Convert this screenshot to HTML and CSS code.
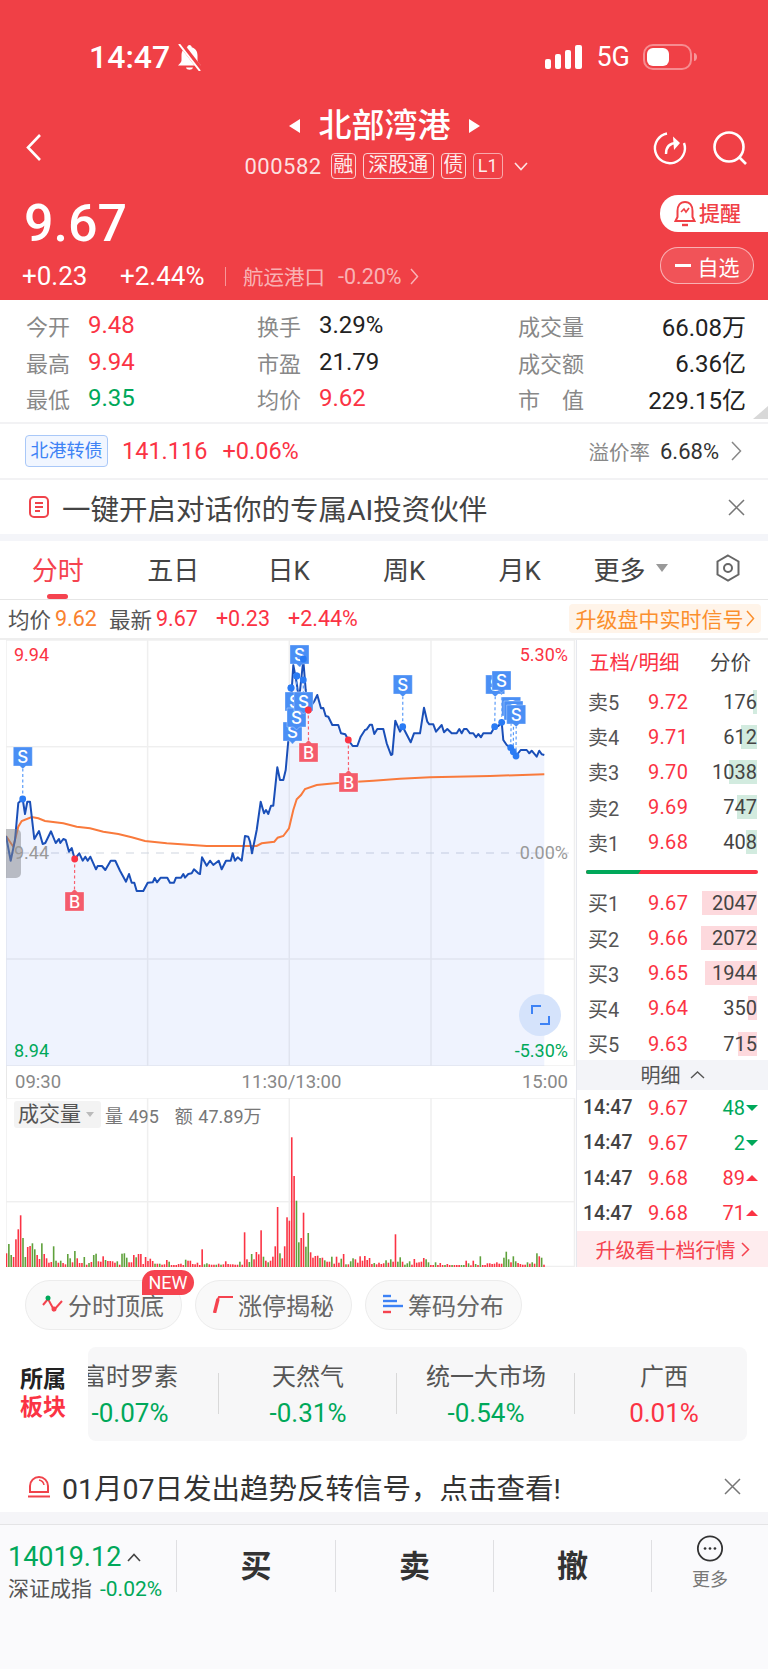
FILE: index.html
```html
<!DOCTYPE html>
<html lang="zh-CN">
<head>
    <meta charset="UTF-8">
    <meta name="viewport" content="width=device-width, initial-scale=1.0">
    <title>北部湾港 000582</title>
    <link rel="stylesheet" href="styles.css">
</head>
<body>
<div class="page">
    <header class="header">
        <div class="status-bar">
            <div class="status-left">
                <span class="clock">14:47</span>
                <svg class="bell-mute" width="27" height="27" viewBox="0 0 27 27"><path d="M13.500 1c-1.200 0-2.200 1-2.200 2.200-3.800 1-5.800 4.300-5.800 8v5c0 2-2 3.300-3.500 5.300h23c-1.500-2-3.500-3.300-3.500-5.300v-5c0-3.700-2-7-5.800-8 0-1.200-1-2.200-2.200-2.200zM10 23.500h7c-.6 3-6.400 3-7 0z" fill="#fff"/><path d="M5 0l21 27" stroke="#f04046" stroke-width="5"/><path d="M3 0l21 27" stroke="#fff" stroke-width="2"/></svg>
            </div>
            <div class="status-right">
                <svg width="37" height="24" viewBox="0 0 37 24" fill="#fff"><rect x="0" y="14" width="6" height="10" rx="2"/><rect x="10" y="9" width="6" height="15" rx="2"/><rect x="20" y="5" width="6" height="19" rx="2"/><rect x="30" y="0" width="7" height="24" rx="2"/></svg>
                <span class="net">5G</span>
                <svg width="54" height="26" viewBox="0 0 54 26"><rect x="1" y="1" width="47" height="24" rx="9" fill="none" stroke="#fff" stroke-opacity=".4" stroke-width="2"/><rect x="4" y="4" width="22" height="18" rx="6" fill="#fff"/><path d="M51 9c2 0 3 2 3 4s-1 4-3 4z" fill="#fff" fill-opacity=".45"/></svg>
            </div>
        </div>
        <div class="nav">
            <svg class="back" width="17" height="29" viewBox="0 0 17 29"><path d="M15 2L3 14.500 15 27" fill="none" stroke="#fff" stroke-width="2.600"/></svg>
            <div class="nav-title">
                <div class="stock-name"><span class="arrow-left"></span>北部湾港<span class="arrow-right"></span></div>
                <div class="stock-sub">
                    <span class="stock-code">000582</span>
                    <span class="tag">融</span>
                    <span class="tag tag-wide">深股通</span>
                    <span class="tag">债</span>
                    <span class="tag tag-dim">L1</span>
                    <svg width="14" height="9" viewBox="0 0 14 9"><path d="M1 1l6 6.500L13 1" fill="none" stroke="#fff" stroke-opacity=".85" stroke-width="1.600"/></svg>
                </div>
            </div>
            <div class="nav-icons">
                <svg width="36" height="36" viewBox="0 0 36 36" fill="none" stroke="#fff" stroke-width="2.400"><path d="M15 3.500A15 15 0 1 0 32 13"/><path d="M14 24c0-7 4-11 11-11"/><path d="M21 6.500l7 6.500-6 7" stroke-width="0" fill="#fff"/></svg>
                <svg width="36" height="36" viewBox="0 0 36 36" fill="none" stroke="#fff" stroke-width="2.600"><circle cx="17" cy="17" r="14.500"/><path d="M27 27l7 7"/></svg>
            </div>
        </div>
        <div class="quote">
            <div class="quote-main">
                <div class="last-price">9.67</div>
                <div class="quote-change">
                    <span class="chg-abs">+0.23</span>
                    <span class="chg-pct">+2.44%</span>
                    <span class="chg-sep"></span>
                    <span class="chg-sector">航运港口</span>
                    <span class="chg-sector-val">-0.20%</span>
                    <svg width="9" height="17" viewBox="0 0 9 17"><path d="M1 1l6.500 7.500L1 16" fill="none" stroke="#fff" stroke-opacity=".6" stroke-width="1.500"/></svg>
                </div>
            </div>
            <div class="quote-actions">
                <div class="btn-remind">
                    <svg width="22" height="28" viewBox="0 0 22 28" fill="none" stroke="#f04046" stroke-width="2"><path d="M11 2C6 2 3.500 6 3.500 11v6L1.500 21h19l-2-4v-6C18.500 6 16 2 11 2z"/><path d="M7 12l3-3 2 3 3-4" stroke-width="1.600"/><path d="M8 25h6" stroke-width="2.400"/></svg>
                    <span>提醒</span>
                </div>
                <div class="btn-watch"><span class="minus"></span>自选</div>
            </div>
        </div>
    </header>

    <section class="stats">
        <div class="stat-col stat-col-1">
            <div class="stat"><span class="stat-label">今开</span><span class="red">9.48</span></div>
            <div class="stat"><span class="stat-label">最高</span><span class="red">9.94</span></div>
            <div class="stat"><span class="stat-label">最低</span><span class="green">9.35</span></div>
        </div>
        <div class="stat-col stat-col-2">
            <div class="stat"><span class="stat-label">换手</span><span>3.29%</span></div>
            <div class="stat"><span class="stat-label">市盈</span><span>21.79</span></div>
            <div class="stat"><span class="stat-label">均价</span><span class="red">9.62</span></div>
        </div>
        <div class="stat-col stat-col-3">
            <div class="stat"><span class="stat-label">成交量</span><span>66.08万</span></div>
            <div class="stat"><span class="stat-label">成交额</span><span>6.36亿</span></div>
            <div class="stat"><span class="stat-label stat-label-wide">市值</span><span>229.15亿</span></div>
        </div>
        <div class="corner"></div>
    </section>

    <section class="bond">
        <span class="bond-tag">北港转债</span>
        <span class="bond-price red">141.116</span>
        <span class="bond-pct red">+0.06%</span>
        <span class="bond-premium">溢价率</span>
        <span class="bond-premium-val">6.68%</span>
        <svg width="11" height="20" viewBox="0 0 11 20"><path d="M1 1l8.500 9L1 19" fill="none" stroke="#888" stroke-width="1.500"/></svg>
    </section>

    <section class="notice notice-ai">
        <svg width="20" height="22" viewBox="0 0 20 22" fill="none" stroke="#f0434b" stroke-width="2"><rect x="1" y="1" width="18" height="20" rx="4"/><path d="M6 7h8M6 11h8M6 15h5"/></svg>
        <span class="notice-text">一键开启对话你的专属AI投资伙伴</span>
        <svg class="close" width="17" height="17" viewBox="0 0 17 17"><path d="M1 1l15 15M16 1L1 16" stroke="#777" stroke-width="1.500"/></svg>
    </section>
    <div class="band"></div>

    <nav class="tabs">
        <span class="tab active">分时</span>
        <span class="tab">五日</span>
        <span class="tab">日K</span>
        <span class="tab">周K</span>
        <span class="tab">月K</span>
        <span class="tab">更多<i class="caret"></i></span>
        <span class="tab tab-icon">
            <svg width="26" height="28" viewBox="0 0 26 28" fill="none" stroke="#666" stroke-width="2"><path d="M13 1.500l10.500 6v13l-10.500 6-10.500-6v-13z"/><circle cx="13" cy="14" r="4"/></svg>
        </span>
    </nav>

    <div class="avg-row">
        <span>均价</span><span class="orange num">9.62</span>
        <span class="gap">最新</span><span class="red num">9.67</span>
        <span class="red gap-wide">+0.23</span>
        <span class="red gap-wide">+2.44%</span>
        <span class="upgrade-signal">升级盘中实时信号<svg width="9" height="17" viewBox="0 0 9 17"><path d="M1 1l6.500 7.500L1 16" fill="none" stroke="#fb8f2d" stroke-width="1.500"/></svg></span>
    </div>

    <section class="market">
        <div class="charts">
            <div class="price-chart">
                <svg id="priceChart" width="570" height="426" viewBox="6 640 570 426"></svg>
                <span class="handle"></span>
                <span class="axis-tl red">9.94</span>
                <span class="axis-tr red">5.30%</span>
                <span class="axis-ml">9.44</span>
                <span class="axis-mr">0.00%</span>
                <span class="axis-bl green">8.94</span>
                <span class="axis-br green">-5.30%</span>
                <span class="expand"><svg width="19" height="20" viewBox="0 0 19 20" fill="none" stroke="#3d82f5" stroke-width="2"><path d="M1 9V1h9M18 11v8H9"/></svg></span>
            </div>
            <div class="time-axis"><span>09:30</span><span>11:30/13:00</span><span>15:00</span></div>
            <div class="vol-chart">
                <svg id="volChart" width="570" height="169" viewBox="6 1098 570 169"></svg>
                <div class="vol-legend">
                    <span class="vol-select">成交量<i class="caret caret-small"></i></span>
                    <span class="vol-item">量 495</span>
                    <span class="vol-item">额 47.89万</span>
                </div>
            </div>
        </div>
        <aside class="book">
            <div class="book-head"><span class="red">五档/明细</span><span>分价</span></div>
            <div class="book-row"><span class="book-label">卖5</span><span class="book-price red">9.72</span><span class="book-qty"><i class="bar-sell" style="width:4px"></i><b>176</b></span></div>
            <div class="book-row"><span class="book-label">卖4</span><span class="book-price red">9.71</span><span class="book-qty"><i class="bar-sell" style="width:16px"></i><b>612</b></span></div>
            <div class="book-row"><span class="book-label">卖3</span><span class="book-price red">9.70</span><span class="book-qty"><i class="bar-sell" style="width:28px"></i><b>1038</b></span></div>
            <div class="book-row"><span class="book-label">卖2</span><span class="book-price red">9.69</span><span class="book-qty"><i class="bar-sell" style="width:20px"></i><b>747</b></span></div>
            <div class="book-row"><span class="book-label">卖1</span><span class="book-price red">9.68</span><span class="book-qty"><i class="bar-sell" style="width:11px"></i><b>408</b></span></div>
            <div class="book-ratio"><i class="ratio-green"></i></div>
            <div class="book-row"><span class="book-label">买1</span><span class="book-price red">9.67</span><span class="book-qty"><i class="bar-buy" style="width:55px"></i><b>2047</b></span></div>
            <div class="book-row"><span class="book-label">买2</span><span class="book-price red">9.66</span><span class="book-qty"><i class="bar-buy" style="width:56px"></i><b>2072</b></span></div>
            <div class="book-row"><span class="book-label">买3</span><span class="book-price red">9.65</span><span class="book-qty"><i class="bar-buy" style="width:52px"></i><b>1944</b></span></div>
            <div class="book-row"><span class="book-label">买4</span><span class="book-price red">9.64</span><span class="book-qty"><i class="bar-buy" style="width:9px"></i><b>350</b></span></div>
            <div class="book-row"><span class="book-label">买5</span><span class="book-price red">9.63</span><span class="book-qty"><i class="bar-buy" style="width:19px"></i><b>715</b></span></div>
            <div class="detail-head">明细<svg width="15" height="8" viewBox="0 0 15 8"><path d="M1 7l6.500-6L14 7" fill="none" stroke="#555" stroke-width="1.400"/></svg></div>
            <div class="detail-row"><span>14:47</span><span class="book-price red">9.67</span><span class="detail-qty green">48<i class="tri-down"></i></span></div>
            <div class="detail-row"><span>14:47</span><span class="book-price red">9.67</span><span class="detail-qty green">2<i class="tri-down"></i></span></div>
            <div class="detail-row"><span>14:47</span><span class="book-price red">9.68</span><span class="detail-qty red">89<i class="tri-up"></i></span></div>
            <div class="detail-row"><span>14:47</span><span class="book-price red">9.68</span><span class="detail-qty red">71<i class="tri-up"></i></span></div>
            <div class="upgrade-book">升级看十档行情<svg width="9" height="15" viewBox="0 0 9 15"><path d="M1 1l6.500 6.500L1 14" fill="none" stroke="#f5434f" stroke-width="1.500"/></svg></div>
        </aside>
    </section>

    <section class="chips">
        <div class="chip">
            <svg width="22" height="20" viewBox="0 0 22 20" fill="none" stroke-width="2"><path d="M1 11l5-6 6 11 8-9" stroke="#f5434f"/><circle cx="6" cy="4" r="2.500" fill="#00a85a"/><circle cx="12" cy="15" r="2.500" fill="#f5434f"/></svg>
            <span>分时顶底</span>
            <em class="badge-new">NEW</em>
        </div>
        <div class="chip">
            <svg width="22" height="18" viewBox="0 0 22 18" fill="none" stroke="#f5434f"><path d="M2.500 18L6 4" stroke-width="3.400"/><path d="M5.500 5L7 2h14" stroke-width="2"/></svg>
            <span>涨停揭秘</span>
        </div>
        <div class="chip">
            <svg width="22" height="22" viewBox="0 0 22 22" fill="none" stroke-width="2.400"><path d="M1 3h8" stroke="#3d82f5"/><path d="M1 8h14" stroke="#3d82f5"/><path d="M1 13h20" stroke="#3d82f5"/><path d="M1 19h8" stroke="#f5434f"/></svg>
            <span>筹码分布</span>
        </div>
    </section>

    <section class="sector">
        <div class="sector-title"><span>所属</span><span class="red">板块</span></div>
        <div class="sector-card">
            <div class="sector-scroll">
                <div class="sector-item"><span>富时罗素</span><strong class="green">-0.07%</strong></div>
                <div class="sector-item"><span>天然气</span><strong class="green">-0.31%</strong></div>
                <div class="sector-item"><span>统一大市场</span><strong class="green">-0.54%</strong></div>
                <div class="sector-item"><span>广西</span><strong class="red">0.01%</strong></div>
            </div>
        </div>
    </section>

    <section class="notice notice-signal">
        <svg width="22" height="23" viewBox="0 0 22 23" fill="none" stroke="#f0434b" stroke-width="2"><path d="M2 17v-6a9 9 0 0 1 18 0v6z"/><path d="M11 5a6 6 0 0 1 5 5" stroke-width="1.500"/><path d="M0 21.500h22"/></svg>
        <span class="notice-text">01月07日发出趋势反转信号，点击查看!</span>
        <svg class="close" width="17" height="17" viewBox="0 0 17 17"><path d="M1 1l15 15M16 1L1 16" stroke="#777" stroke-width="1.500"/></svg>
    </section>
    <div class="band band-bottom"></div>

    <footer class="footer">
        <div class="index-box">
            <div class="index-top green">14019.12<svg width="14" height="9" viewBox="0 0 14 9"><path d="M1 8l6-6.500L13 8" fill="none" stroke="#444" stroke-width="1.600"/></svg></div>
            <div class="index-bottom"><span>深证成指</span><span class="green">-0.02%</span></div>
        </div>
        <div class="trade-btn">买</div>
        <div class="trade-btn">卖</div>
        <div class="trade-btn">撤</div>
        <div class="more-btn">
            <svg width="30" height="30" viewBox="0 0 30 30"><circle cx="15" cy="15" r="13.500" fill="none" stroke="#333" stroke-width="2"/><circle cx="9.500" cy="15" r="1.500" fill="#333"/><circle cx="15" cy="15" r="1.500" fill="#333"/><circle cx="20.500" cy="15" r="1.500" fill="#333"/></svg>
            <span>更多</span>
        </div>
    </footer>
</div>
<script src="script.js"></script>
</body>
</html>
```

FILE: styles.css
```css
* {
    margin: 0;
    padding: 0;
    box-sizing: border-box;
}

body {
    font-family: Roboto, "Noto Sans CJK SC", sans-serif;
    background: #fff;
    color: #333;
}

i, em {
    font-style: normal;
}

b {
    font-weight: 400;
}

.page {
    width: 768px;
    height: 1669px;
    overflow: hidden;
    background: #fff;
}

.red { color: #fb3344; }
.green { color: #00a85a; }
.orange { color: #f9812f; }

/* header */
.header {
    height: 300px;
    background: #f04046;
    color: #fff;
}

.status-bar {
    height: 76px;
    padding: 38px 71px 0 89px;
    display: flex;
    justify-content: space-between;
    align-items: center;
}

.status-left,
.status-right {
    display: flex;
    align-items: center;
}

.clock {
    font-size: 32px;
    font-weight: 500;
    line-height: 38px;
}

.bell-mute {
    margin-left: 6px;
}

.net {
    font-size: 27px;
    line-height: 38px;
    margin: 0 13px 0 14px;
}

.nav {
    margin-top: 30px;
    height: 74px;
    position: relative;
    display: flex;
    justify-content: center;
}

.back {
    position: absolute;
    left: 25px;
    top: 27px;
}

.nav-title {
    display: flex;
    flex-direction: column;
    align-items: center;
}

.stock-name {
    font-size: 33px;
    font-weight: 500;
    line-height: 40px;
    display: flex;
    align-items: center;
}

.arrow-left,
.arrow-right {
    width: 0;
    height: 0;
    border-top: 7.500px solid transparent;
    border-bottom: 7.500px solid transparent;
}

.arrow-left {
    border-right: 11px solid #fff;
    margin-right: 19px;
}

.arrow-right {
    border-left: 11px solid #fff;
    margin-left: 18px;
}

.stock-sub {
    margin-top: 7px;
    margin-left: 4px;
    height: 26px;
    display: flex;
    align-items: center;
    gap: 7px;
}

.stock-code {
    font-size: 22px;
    color: rgba(255, 255, 255, .85);
    margin-right: 2px;
    letter-spacing: .5px;
}

.tag {
    height: 26px;
    line-height: 23px;
    padding: 0 1.500px;
    font-size: 20px;
    border: 1px solid rgba(255, 255, 255, .75);
    border-radius: 4px;
    color: rgba(255, 255, 255, .92);
}

.tag-wide {
    padding: 0 4.500px;
}

.tag-dim {
    padding: 0 4px;
    font-size: 18px;
    border-color: rgba(255, 255, 255, .55);
}

.stock-sub svg {
    margin-left: 4px;
}

.nav-icons {
    position: absolute;
    right: 20px;
    top: 24px;
    display: flex;
    gap: 24px;
}

.quote {
    height: 120px;
    display: flex;
    justify-content: space-between;
}

.quote-main {
    padding: 16px 0 0 24px;
}

.last-price {
    font-size: 52px;
    font-weight: 500;
    line-height: 56px;
}

.quote-change {
    margin-top: 9px;
    height: 30px;
    display: flex;
    align-items: center;
    font-size: 26px;
    margin-left: -2px;
}

.chg-abs {
    width: 98px;
}

.chg-pct {
    width: 105px;
}

.chg-sep {
    width: 1px;
    height: 19px;
    background: rgba(255, 255, 255, .45);
    margin-right: 17px;
}

.chg-sector {
    font-size: 20.500px;
    color: rgba(255, 255, 255, .62);
    margin-right: 13px;
}

.chg-sector-val {
    font-size: 21.500px;
    color: rgba(255, 255, 255, .62);
    margin-right: 8px;
}

.quote-actions {
    padding-top: 15px;
    display: flex;
    flex-direction: column;
    align-items: flex-end;
    gap: 15px;
}

.btn-remind {
    width: 108px;
    height: 37px;
    background: #fff;
    border-radius: 18px 0 0 18px;
    color: #f04046;
    font-size: 21px;
    font-weight: 500;
    line-height: 34px;
    display: flex;
    align-items: center;
    padding-left: 14px;
    gap: 3px;
}

.btn-watch {
    width: 94px;
    height: 37px;
    margin-right: 14px;
    border: 1px solid rgba(255, 255, 255, .55);
    background: rgba(255, 255, 255, .1);
    border-radius: 18px;
    font-size: 21px;
    display: flex;
    align-items: center;
    justify-content: center;
    gap: 7px;
}

.minus {
    width: 16px;
    height: 2.500px;
    background: #fff;
}

/* stats */
.stats {
    height: 124px;
    padding: 7px 22px 0 26px;
    display: flex;
    position: relative;
    font-size: 24px;
    color: #222;
    border-bottom: 2px solid #f2f2f4;
}

.stat-col-1 { width: 231px; }
.stat-col-2 { width: 261px; }
.stat-col-3 { flex: 1; }

.stat {
    height: 36.500px;
    display: flex;
    align-items: center;
}

.stat-col-3 .stat {
    justify-content: space-between;
}

.stat-label {
    width: 62px;
    font-size: 22px;
    color: #888;
}

.stat-col-3 .stat-label {
    width: 68px;
}

.stat-label-wide {
    letter-spacing: 22px;
    white-space: nowrap;
}

.corner {
    position: absolute;
    right: 0;
    bottom: 3px;
    width: 15px;
    height: 13px;
    background: #d8d8d8;
    clip-path: polygon(100% 0, 100% 100%, 0 100%);
}

/* bond row */
.bond {
    height: 56px;
    padding: 0 26px 0 25px;
    display: flex;
    align-items: center;
    border-bottom: 2px solid #f2f2f4;
    font-size: 23.500px;
}

.bond-tag {
    width: 83px;
    height: 32px;
    line-height: 29px;
    text-align: center;
    font-size: 18px;
    color: #3d82f5;
    background: #f1f6ff;
    border: 1px solid #a9c8f8;
    border-radius: 4px;
    margin-right: 14px;
}

.bond-price {
    margin-right: 15px;
}

.bond-premium {
    margin-left: auto;
    font-size: 20.500px;
    color: #888;
    margin-right: 10px;
}

.bond-premium-val {
    margin-right: 12px;
    font-size: 22px;
    color: #333;
}

/* notices */
.notice {
    display: flex;
    align-items: center;
    position: relative;
}

.notice-ai {
    height: 54px;
    padding-left: 29px;
    gap: 13px;
}

.notice-text {
    font-size: 28.500px;
    color: #444;
}

.notice .close {
    position: absolute;
    right: 23px;
}

.band {
    height: 7px;
    background: #f4f5f9;
}

/* tabs */
.tabs {
    height: 59px;
    display: grid;
    grid-template-columns: repeat(5, 115.500px) 106px 1fr;
    border-bottom: 1px solid #e6e6e6;
    font-size: 26px;
    color: #444;
}

.tab {
    position: relative;
    display: flex;
    align-items: center;
    justify-content: center;
    padding-bottom: 4px;
}

.tab-icon {
    padding-left: 5px;
}

.tab.active {
    color: #f5434f;
}

.tab.active::after {
    content: "";
    position: absolute;
    left: 47px;
    bottom: 0;
    width: 21px;
    height: 5px;
    border-radius: 3px;
    background: #f5434f;
}

.caret {
    display: inline-block;
    width: 0;
    height: 0;
    margin-left: 10px;
    border-left: 6.500px solid transparent;
    border-right: 6.500px solid transparent;
    border-top: 8px solid #999;
}

.avg-row {
    height: 40px;
    padding: 0 7px 2px 8px;
    border-bottom: 2px solid #eee;
    display: flex;
    align-items: center;
    font-size: 21.500px;
    color: #555;
}

.num { margin-left: 4px; }
.gap { margin-left: 12px; }
.gap-wide { margin-left: 18px; }

.upgrade-signal {
    margin-left: auto;
    width: 192px;
    height: 29px;
    border-radius: 4px;
    background: #fff4e9;
    color: #fb8f2d;
    font-size: 21px;
    display: flex;
    align-items: center;
    justify-content: center;
    gap: 2px;
}

/* chart area */
.market {
    height: 627px;
    display: flex;
}

.charts {
    width: 576px;
    padding-left: 6px;
}

.price-chart {
    height: 426px;
    position: relative;
}

.price-chart svg,
.vol-chart svg {
    display: block;
}

.price-chart > span {
    position: absolute;
    font-size: 18px;
    line-height: 22px;
}

.handle {
    left: 0;
    top: 189px;
    width: 15px;
    height: 49px;
    background: rgba(130, 132, 138, .5);
    border-radius: 0 5px 5px 0;
}

.axis-tl { left: 8px; top: 4px; }
.axis-tr { right: 8px; top: 4px; }
.axis-ml { left: 8px; top: 202px; color: #999; }
.axis-mr { right: 8px; top: 202px; color: #999; }
.axis-bl { left: 8px; top: 400px; }
.axis-br { right: 8px; top: 400px; }

.expand {
    left: 513px;
    top: 354px;
    width: 42px;
    height: 42px;
    border-radius: 50%;
    background: #d5e3fb;
    display: flex;
    align-items: center;
    justify-content: center;
}

.time-axis {
    height: 32px;
    padding: 0 8px;
    display: flex;
    justify-content: space-between;
    align-items: center;
    font-size: 18.500px;
    color: #888;
    background: #fff;
    border-left: 1px solid #e8e8e8;
}

.vol-chart {
    height: 169px;
    position: relative;
}

.vol-legend {
    position: absolute;
    left: 8px;
    top: 3px;
    display: flex;
    align-items: center;
    font-size: 18px;
    color: #777;
}

.vol-select {
    width: 87px;
    height: 27px;
    padding-left: 4px;
    background: #f3f3f3;
    border-radius: 3px;
    font-size: 21px;
    line-height: 27px;
    color: #555;
    margin-right: 4px;
    display: flex;
    align-items: center;
}

.caret-small {
    margin-left: 5px;
    border-left-width: 4px;
    border-right-width: 4px;
    border-top-width: 5px;
    border-top-color: #bbb;
}

.vol-item {
    margin-right: 16px;
    word-spacing: 1px;
}

/* order book */
.book {
    width: 192px;
    border-left: 1px solid #e6e8ee;
    font-size: 20px;
    color: #444;
}

.book-head {
    height: 44px;
    padding: 0 17px 3px 12px;
    display: flex;
    justify-content: space-between;
    align-items: center;
    font-size: 20.500px;
}

.book-row {
    height: 35.200px;
    padding: 0 11px 0 11px;
    display: flex;
    align-items: center;
}

.book-label {
    width: 60px;
    color: #555;
}

.book-price {
    letter-spacing: .3px;
}

.book-qty {
    flex: 1;
    height: 24px;
    line-height: 24px;
    text-align: right;
    position: relative;
}

.book-qty b {
    position: relative;
}

.book-qty i {
    position: absolute;
    right: 0;
    top: 0;
    height: 24px;
}

.bar-sell { background: #d2ebdf; }
.bar-buy { background: #fdd9dd; }

.book-ratio {
    height: 4px;
    margin: 10px 10px 11.400px 9px;
    border-radius: 2px;
    background: #fb3344;
    overflow: hidden;
}

.ratio-green {
    display: block;
    width: 55px;
    height: 4px;
    background: #00a85a;
    clip-path: polygon(0 0, 100% 0, 95% 100%, 0 100%);
}

.detail-head {
    height: 30px;
    margin-top: -1.400px;
    background: #f3f4f8;
    display: flex;
    align-items: center;
    justify-content: center;
    gap: 9px;
    color: #555;
}

.detail-row {
    height: 35.300px;
    padding: 0 10px 0 6px;
    display: flex;
    align-items: center;
    font-size: 19.500px;
    font-weight: 500;
    color: #444;
}

.detail-row > span:first-child {
    width: 65px;
}

.detail-row .book-price {
    font-size: 20px;
    font-weight: 400;
}

.detail-qty {
    margin-left: auto;
    display: flex;
    align-items: center;
    gap: 1px;
    font-size: 20px;
    font-weight: 400;
}

.tri-down,
.tri-up {
    width: 0;
    height: 0;
    border-left: 6px solid transparent;
    border-right: 6px solid transparent;
}

.tri-down { border-top: 6px solid #00a85a; }
.tri-up { border-bottom: 6px solid #fb3344; }

.upgrade-book {
    height: 36px;
    background: #feecee;
    color: #f5434f;
    display: flex;
    align-items: center;
    justify-content: center;
    gap: 5px;
}

/* feature chips */
.chips {
    padding: 13px 0 0 25px;
    display: flex;
    gap: 13px;
}

.chip {
    width: 157px;
    height: 50px;
    position: relative;
    padding: 0 0 2px 16px;
    background: #f9f9f9;
    border: 1px solid #ececec;
    border-radius: 25px;
    display: flex;
    align-items: center;
    gap: 4px;
    font-size: 24px;
    color: #666;
}

.badge-new {
    position: absolute;
    left: 116px;
    top: -11px;
    width: 52px;
    height: 25px;
    line-height: 25px;
    text-align: center;
    background: #f5434f;
    color: #fff;
    font-size: 18px;
    border-radius: 14px 14px 14px 0;
}

/* sector */
.sector {
    margin-top: 17px;
    height: 94px;
    padding-left: 20px;
    display: flex;
    align-items: center;
}

.sector-title {
    width: 68px;
    display: flex;
    flex-direction: column;
    font-size: 23px;
    font-weight: 700;
    line-height: 28px;
    color: #222;
}

.sector-card {
    width: 659px;
    height: 94px;
    background: #f7f7f8;
    border-radius: 8px;
    overflow: hidden;
}

.sector-scroll {
    margin-left: -47px;
    display: flex;
    width: 720px;
    height: 94px;
}

.sector-item {
    flex: 0 0 178px;
    position: relative;
    display: flex;
    flex-direction: column;
    align-items: center;
    padding-top: 14px;
    font-size: 24px;
    line-height: 32px;
    color: #555;
}

.sector-item strong {
    margin-top: 4px;
    font-size: 26px;
    font-weight: 400;
}

.sector-item:not(:last-child)::after {
    content: "";
    position: absolute;
    right: 0;
    top: 26px;
    width: 1px;
    height: 41px;
    background: #d9d9d9;
}

.notice-signal {
    height: 71px;
    padding: 19px 0 0 28px;
    gap: 12px;
}

.notice-signal .notice-text {
    font-size: 28.500px;
    color: #333;
}

.notice-signal .close {
    right: 27px;
    top: 37px;
}

.band-bottom {
    height: 13px;
    background: #f5f5f8;
    border-bottom: 1px solid #e4e4e6;
}

/* footer */
.footer {
    height: 144px;
    background: #fafafc;
    display: grid;
    grid-template-columns: 176px 159px 158px 158px 1fr;
    align-items: start;
    padding-top: 15px;
}

.index-box {
    height: 52px;
    padding-left: 8px;
}

.index-top {
    font-size: 27px;
    line-height: 34px;
    display: flex;
    align-items: center;
    gap: 6px;
}

.index-bottom {
    font-size: 21px;
    line-height: 30px;
    color: #555;
    display: flex;
    gap: 8px;
}

.trade-btn {
    height: 52px;
    border-left: 1px solid #dfdfe2;
    text-align: center;
    font-size: 31px;
    font-weight: 700;
    line-height: 54px;
    color: #333;
}

.more-btn {
    height: 52px;
    border-left: 1px solid #dfdfe2;
    display: flex;
    flex-direction: column;
    align-items: center;
    font-size: 18px;
    color: #777;
}

.more-btn svg {
    margin-top: -5px;
}

.more-btn span {
    margin-top: 6px;
    line-height: 24px;
}
```

FILE: script.js
```js
const NS = 'http://www.w3.org/2000/svg';

function add(svg, tag, attrs, text) {
    const el = document.createElementNS(NS, tag);
    for (const key in attrs) el.setAttribute(key, attrs[key]);
    if (text) el.textContent = text;
    svg.appendChild(el);
    return el;
}

const priceLine = [[6,836],[10.7,860.7],[15,840],[18.3,803],[22.7,799],[25,814],[27.3,801.7],[30,801.7],[34.3,839],[39,831],[42.7,844],[45.3,843],[51,831.3],[55.7,843],[59,839],[60.3,843],[63.3,839],[65.7,840],[69,851.7],[71.7,848],[74.7,859],[79.3,853.3],[82.7,860.7],[85.3,856.7],[87.7,860.7],[90.3,856.7],[96,869.3],[97.7,866],[102,866],[105.3,870],[110.7,860.7],[115.3,860.7],[120,870.7],[126,881.7],[129,874],[131.7,882.7],[134.3,882.7],[136.7,891],[143.3,891],[147.7,882.7],[152.7,882.3],[154.7,878],[157,882.3],[160.7,877.7],[167.3,877.7],[170,882.7],[174,882.7],[176,877.7],[181,877.7],[183.3,874],[185,877.7],[188.3,874],[191.7,873.3],[194,869.3],[198.3,873.3],[200,874],[202,857.3],[206.7,865.7],[210,860.7],[213.3,865],[218.7,860.7],[221.7,869.3],[226,860.7],[230.7,860.7],[232.7,853.3],[235,860.7],[237.7,857.3],[241.7,860.7],[245,836],[248.3,836.7],[250,841.7],[252,853.3],[256.7,830],[260.7,801.7],[264,813.3],[266,810],[268.3,814],[271,805.7],[273.3,805.7],[277.3,767.3],[280,780],[283.3,780],[285.7,770],[289,733],[291.7,690],[293.3,665],[296.7,683],[299,700],[303.3,660],[305.7,690],[308.3,710],[314,701.7],[317.3,695],[321,708.3],[323.3,708],[325.7,716],[328.3,716.7],[332.3,725],[338.3,725],[341,733.3],[345.3,734.3],[348.3,740],[352.7,746],[357.3,746],[360.7,736.7],[365,730],[366.7,729.3],[370,724.7],[372,724.7],[374.3,734],[377.3,729],[383.3,729],[386.7,743.3],[391,755],[392.3,754.3],[395.3,720.7],[400,731.7],[402.7,726.7],[410.7,742.3],[414,733.3],[420,733.3],[424,707.7],[427.3,721.7],[429.3,724.3],[433.3,724.3],[436,731.7],[441.7,725],[444,732.3],[447.3,729],[451.7,733.3],[456.7,733.3],[459.3,729],[461.7,733.3],[464,729],[466.7,729],[470,733.3],[473.3,733.3],[476,737.3],[478.3,734],[481,737.3],[483.3,733.3],[491,733.3],[494.7,726.7],[498.3,726],[501.7,722.3],[503.3,740],[506.7,745],[510.7,747.7],[513.3,751.7],[516,756],[520.7,750],[526.7,750],[529.3,753.3],[531.7,750.7],[536.7,756.7],[539.3,750.7],[541.7,754.3],[544.3,755]];

const avgLine = [[6,836],[13.3,846.7],[18.3,826.7],[21.7,821],[31.7,817],[38.3,818.3],[45,821],[63.3,823.3],[76.7,826.7],[90,828.3],[103.3,831.7],[118.3,834],[131.7,837.3],[145,841],[166.7,843.3],[206.7,846],[256.7,846],[261.7,843.3],[274.3,841.7],[277.7,837.7],[283.3,836],[289,828.3],[293.3,810],[296.7,799.3],[301,795],[305,789],[316.7,785],[340,782.7],[373.3,780.7],[400,778.7],[430,777.3],[490,776],[544.3,774.3]];

// [dot x, dot y, flag left, flag top]
const sells = [[22.7,799,13.3,747],[291,688,283,722],[291,688,285,692],[296.7,676,287,708],[303.3,659,290,645],[303.3,680,294,692],[402.7,726.7,393.3,675],[494.7,726.7,485.7,675],[501.7,722.3,492,671],[510.7,747.7,501.7,697],[513.3,751.7,504,701],[516,756,506.7,705]];
const buys = [[74.7,859,65,892],[308.3,710,299,743],[348.3,740,339,773]];

// bar heights, negative = down minute (green)
const volumes = [13.7,-23,-12,10,27.7,37.7,51.7,-29,-10,20,21,-23.7,-17.7,12,8,-23.7,13,8.7,4.3,5,-20.7,-6.3,4.3,-6.3,4,2.7,-13,-8.7,4.7,-16,8.7,4,4,-10,2.3,-4,5,-12,-13.3,5.7,5.3,10.7,-7,6,6,5.7,4.3,-5.7,2.3,-13.3,-13.7,-9.3,4.7,4.7,12,-9.7,13,13,3,10,6,8.3,6,-3.3,3.3,-3.3,2.3,2.7,7,-5.3,2,2,2,3,3.3,2,-7.3,6.3,6.3,3,2.7,4.3,2,17.7,-2.7,-3.7,2.7,2.3,2.3,-2.3,3.3,-2.3,2.7,5.7,3,2.7,2.7,2.3,2.3,-5.3,2.3,34.7,7.7,-5,-13,7.7,15,12.7,36.7,-10.3,6.3,-4.7,6.3,10.3,20.7,60,-13.7,8.7,20.7,49.7,46.3,129.7,91,-66.3,-24.7,29,54.3,-20.3,-34,14.7,9.3,11,11.3,-9,9.3,-6.7,5.3,5.3,-10.3,3.3,10.3,4.3,-8.3,13,-2.7,2.7,-5.7,-8.7,7.7,4.3,10.7,6.3,11,7,9,3,-4,2.7,4.3,3,3.7,-6.7,4.3,-7.7,5.3,32.7,-5.3,-9.7,5.3,-2.3,-3.7,-5.7,2.3,8,4.3,4.7,5.3,9,-7.7,-4.7,2,2,-4.7,2,4,2,-2,3,2,-2,2,2,2,-2,-2,6.3,-3.7,1.7,6.3,-3,2,-10.7,2,2,3.7,3.7,3,3.3,4.7,3.3,3.3,-9.3,-15.3,-7.7,4.7,-10.7,-5.7,4,3,2.3,2.3,-4.7,3.3,-4.7,3.3,-13.7,10.7,-9.3,2.3];

function drawGrid(svg, top, bottom, rows) {
    const lines = '#efefef';
    add(svg, 'rect', { x: 5, y: top, width: 1.5, height: bottom - top, fill: '#e6e6e6' });
    [147.6, 289.3, 431, 574.5].forEach(x => add(svg, 'rect', { x: x - 0.75, y: top, width: 1.5, height: bottom - top, fill: lines }));
    rows.forEach(y => add(svg, 'rect', { x: 6, y: y - 0.75, width: 569, height: 1.5, fill: lines }));
}

function drawFlag(svg, x, y, label, color) {
    const r = x + 19, b = y + 19, mid = x + 9.5;
    const d = label === 'S'
        ? `M${x} ${y}H${r}V${b}H${mid + 3}L${mid} ${b + 3}L${mid - 3} ${b}H${x}Z`
        : `M${x} ${y}H${mid - 3}L${mid} ${y - 3}L${mid + 3} ${y}H${r}V${b}H${x}Z`;
    add(svg, 'path', { d: d, fill: color, stroke: '#fff', 'stroke-opacity': 0.45, 'stroke-width': 0.7 });
    add(svg, 'text', { x: mid, y: y + 15.8, fill: '#fff', 'font-size': 17, 'font-weight': 500, 'font-family': 'Inter, Roboto, sans-serif', 'text-anchor': 'middle' }, label);
}

function drawSignal(svg, item, label, color, dotColor) {
    const [dx, dy, fx, fy] = item;
    const anchor = label === 'S' ? fy + 22 : fy - 3;
    add(svg, 'path', { d: `M${dx} ${dy}L${fx + 9.5} ${anchor}`, stroke: color, 'stroke-width': 1.2, 'stroke-dasharray': '3 2.5', fill: 'none' });
    if (dotColor) add(svg, 'circle', { cx: dx, cy: dy, r: 3.4, fill: dotColor });
}

function drawPrice() {
    const svg = document.getElementById('priceChart');
    add(svg, 'rect', { x: 6, y: 640, width: 570, height: 426, fill: '#fff' });
    drawGrid(svg, 640, 1066, [640, 746.7, 959, 1066]);
    add(svg, 'path', { d: 'M6 853H575', stroke: '#cfd6e0', 'stroke-width': 1.2, 'stroke-dasharray': '8 7' });

    const pts = priceLine.map(p => p.join(',')).join(' ');
    add(svg, 'polygon', { points: `${pts} 544.3,1066 6,1066`, fill: 'rgba(66,120,240,.085)' });
    add(svg, 'polyline', { points: avgLine.map(p => p.join(',')).join(' '), fill: 'none', stroke: '#f97a3c', 'stroke-width': 2 });
    add(svg, 'polyline', { points: pts, fill: 'none', stroke: '#1a4fb8', 'stroke-width': 2, 'stroke-linejoin': 'round' });

    sells.forEach(s => drawSignal(svg, s, 'S', '#5a9bf8', '#2a7bf4'));
    buys.forEach(b => drawSignal(svg, b, 'B', '#f8606e', '#fb3344'));
    sells.forEach(s => drawFlag(svg, s[2], s[3], 'S', '#4a8ff5'));
    buys.forEach(b => drawFlag(svg, b[2], b[3], 'B', '#f45c6c'));
    // the first dots sit on top of the flags near the peak
    add(svg, 'circle', { cx: 303.3, cy: 659, r: 3.4, fill: '#2a7bf4' });
    add(svg, 'circle', { cx: 296.7, cy: 676, r: 3.4, fill: '#2a7bf4' });
    add(svg, 'circle', { cx: 308.3, cy: 710, r: 3.4, fill: '#fb3344' });
}

function drawVolume() {
    const svg = document.getElementById('volChart');
    add(svg, 'rect', { x: 6, y: 1098, width: 570, height: 169, fill: '#fff' });
    drawGrid(svg, 1098, 1267, [1098, 1201.7, 1266.5]);
    const step = (544 - 6.5) / (volumes.length - 1);
    volumes.forEach((v, i) => {
        add(svg, 'rect', {
            x: (6.5 + i * step - 0.8).toFixed(2),
            y: (1267 - Math.abs(v)).toFixed(1),
            width: 1.6,
            height: Math.abs(v),
            fill: v < 0 ? '#5fa13c' : '#fb3344'
        });
    });
}

drawPrice();
drawVolume();
```
